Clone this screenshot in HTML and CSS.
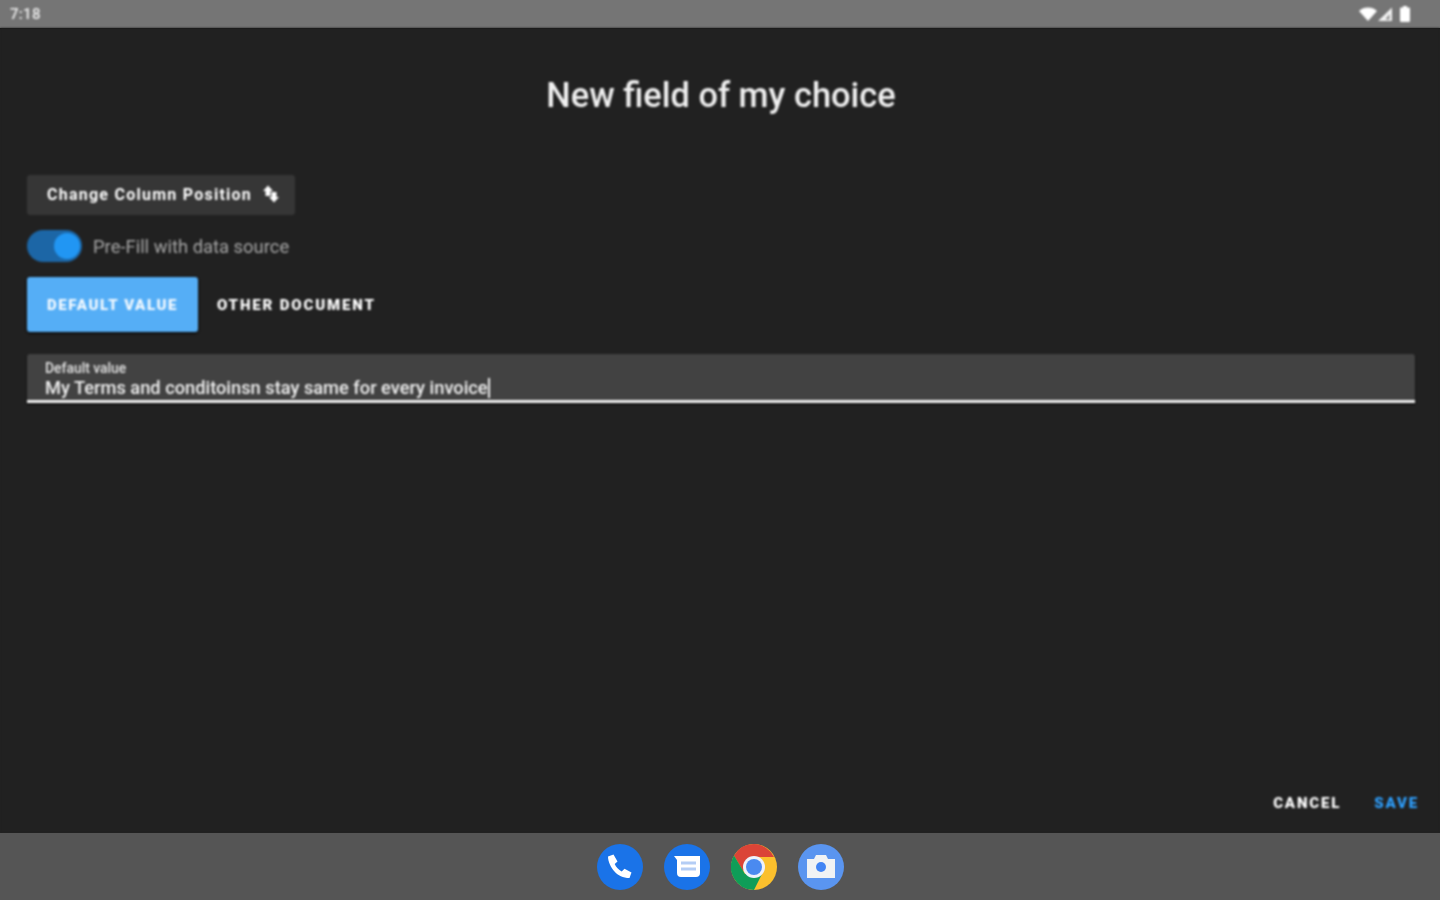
FILE: index.html
```
<!DOCTYPE html>
<html lang="en">
<head>
<meta charset="utf-8">
<title>New field of my choice</title>
<link rel="stylesheet" href="styles.css">
</head>
<body>
<div class="screen">
  <header class="status">
    <span class="time">7:18</span>
    <div class="status-icons">
      <svg viewBox="0 0 18 14" width="18" height="14"><path d="M0 4C2.500 1.500 5.500 .5 9 .5s6.500 1 9 3.500L9 14z" fill="#fff"/></svg>
      <svg viewBox="0 0 16 14" width="16" height="14"><path d="M0 14L14 .5V14z" fill="#f2f2f2"/><path d="M8 11.500L11.500 7V12.500H8z" fill="#8a8a8a"/></svg>
      <svg class="batt" viewBox="0 0 12 16" width="12" height="16"><path d="M1 2.500Q1 1.500 2 1.500H4V0H8V1.500H10Q11 1.500 11 2.500V15Q11 16 10 16H2Q1 16 1 15z" fill="#fff"/></svg>
    </div>
  </header>
  <main class="content">
    <h1 class="title">New field of my choice</h1>
    <button class="col-btn"><span>Change Column Position</span>
      <svg viewBox="0 0 18 18" width="18" height="18"><path d="M6 .5L11 6H8.500V11H3.500V6H1z" fill="#fff"/><path d="M12 17.500L7 12H9.500V7H14.500V12H17z" fill="#fff"/></svg>
    </button>
    <div class="toggle-row">
      <span class="toggle"><span class="knob"></span></span>
      <span class="toggle-label">Pre-Fill with data source</span>
    </div>
    <div class="tabs">
      <span class="tab active">DEFAULT VALUE</span>
      <span class="tab">OTHER DOCUMENT</span>
    </div>
    <div class="field">
      <span class="field-label">Default value</span>
      <span class="field-value">My Terms and conditoinsn stay same for every invoice<i class="caret"></i></span>
    </div>
    <div class="actions">
      <span class="act">CANCEL</span>
      <span class="act save">SAVE</span>
    </div>
  </main>
  <footer class="dock">
    <svg viewBox="0 0 46 46" width="46" height="46"><circle cx="23" cy="23" r="23" fill="#1a73e8"/><path d="M11 12.500l5.500-2 4 7-2.800 2.500c1.200 3 4 6 7 7.500l2.800-2.800 7 3.800-2 5.500C26 34 21 31.500 17.500 27.500S11 18 11 12.500z" fill="#fff"/></svg>
    <svg viewBox="0 0 46 46" width="46" height="46"><circle cx="23" cy="23" r="23" fill="#1a73e8"/><path d="M10 12H36V29Q36 33 32 33H17Q13 33 13 29V16z" fill="#fff"/><path d="M17 17.500H32V20.500H17zM17 23.500H32V26.500H17z" fill="#b4cdf5"/></svg>
    <svg viewBox="0 0 46 46" width="46" height="46"><circle cx="23" cy="23" r="23" fill="#fbc02d"/><path d="M23 0A23 23 0 0 0 3 11.500L12 27 23 13H43A23 23 0 0 0 23 0z" fill="#db4437"/><path d="M3 11.500A23 23 0 0 0 23 46L31 30 14 30z" fill="#0f9d58"/><circle cx="23" cy="23" r="11" fill="#eef2fb"/><circle cx="23" cy="23" r="8" fill="#4a8af0"/></svg>
    <svg viewBox="0 0 46 46" width="46" height="46"><circle cx="23" cy="23" r="23" fill="#5a95f0"/><path d="M9 15H16L18 11H28L30 15H37V34H9z" fill="#f1f3f4"/><circle cx="23" cy="23" r="5" fill="#4285f4"/></svg>
  </footer>
</div>
</body>
</html>
```

FILE: styles.css
```
* { box-sizing: border-box; }
html, body { margin: 0; padding: 0; }
body { width: 1440px; height: 900px; overflow: hidden; background: #212121; font-family: Roboto, "Liberation Sans", sans-serif; }
.screen { width: 1440px; height: 900px; display: flex; flex-direction: column; }
.status { height: 28px; flex: none; background: #757575; display: flex; align-items: center; justify-content: space-between; padding: 0 29px 0 10px; color: #eee; box-shadow: 0 1px 1px #111; }
.time { font-size: 15px; font-weight: 500; letter-spacing: .3px; filter: blur(.8px); }
.status-icons { display: flex; align-items: center; gap: 1px; filter: blur(.8px); }
.batt { margin-left: 4px; }
.content { flex: 1; display: flex; flex-direction: column; align-items: flex-start; padding: 0 25px 0 27px; background: #212121; filter: blur(.8px); }
.title { align-self: center; margin: 47px 0 0; font-size: 34.4px; line-height: 40px; font-weight: 500; color: #f0f0f0; }
.col-btn { margin-top: 60px; height: 40px; width: 268px; padding: 0 15px 2px 20px; display: flex; align-items: center; justify-content: space-between; background: #363636; border: 0; border-radius: 3px; color: #fff; font: 700 16px Roboto, sans-serif; letter-spacing: 1.25px; }
.toggle-row { margin-top: 15px; display: flex; align-items: center; gap: 11px; }
.toggle { width: 55px; height: 32px; border-radius: 16px; background: #1c66a6; display: flex; align-items: center; justify-content: flex-end; padding-right: 2px; }
.knob { width: 26px; height: 26px; border-radius: 50%; background: #2196f3; }
.toggle-label { font-size: 18.4px; color: #a6a6a6; }
.tabs { margin-top: 15px; display: flex; align-items: center; }
.tab { height: 55px; padding: 0 19px; display: flex; align-items: center; white-space: nowrap; font-size: 15px; font-weight: 900; letter-spacing: 1.85px; color: #fff; }
.tab.active { width: 171px; padding: 0 0 0 20px; letter-spacing: 1.6px; background: #55aef6; border-radius: 3px; box-shadow: 0 1px 3px #000; color: #f4faff; }
.field { margin-top: 22px; width: 100%; height: 49px; background: #424242; border-bottom: 3px solid #f5f5f5; border-radius: 3px 3px 0 0; padding: 6px 18px 0; display: flex; flex-direction: column; box-shadow: 0 1px 2px #000; }
.field-label { font-size: 13.9px; line-height: 17px; font-weight: 500; color: #e4e4e4; }
.field-value { font-size: 18.25px; line-height: 22px; font-weight: 500; color: #f0f0f0; }
.caret { display: inline-block; width: 2px; height: 20px; background: #eee; vertical-align: -4px; }
.actions { margin: auto -4px 21px 0; align-self: flex-end; display: flex; gap: 33px; }
.act { font-size: 15px; line-height: 18px; font-weight: 900; letter-spacing: 1.85px; color: #fff; }
.act.save { color: #2ea0ff; }
.dock { height: 67px; flex: none; background: #555; display: flex; align-items: center; justify-content: center; gap: 21px; filter: blur(.7px); }
```
